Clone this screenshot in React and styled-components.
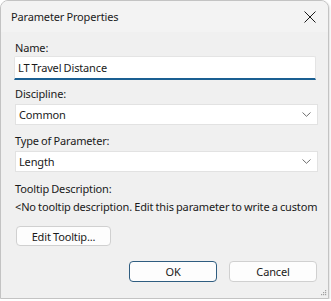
import React from "react";
import styled, { createGlobalStyle } from "styled-components";

const Global = createGlobalStyle`
  html, body { margin: 0; padding: 0; background: #ffffff; }
  body { font-family: "Noto Sans", "Open Sans", sans-serif; font-size: 11px; letter-spacing: -0.15px; word-spacing: -0.5px; color: #1a1a1a; }
  * { box-sizing: border-box; }
`;

const Window = styled.div`
  position: relative;
  width: 329px;
  height: 299px;
  border: 1px solid #c3c3c3;
  border-radius: 8px 8px 0 0;
  background: #f0f0f0;
  display: flex;
  flex-direction: column;
  overflow: hidden;
  box-shadow: 1px 1px 2px rgba(0,0,0,0.12);
`;

const TitleBar = styled.div`
  height: 31px;
  display: flex;
  align-items: center;
  justify-content: space-between;
  padding: 0 10px 0 10px;
  background: #f3f3f3;
`;

const Title = styled.span`
  font-size: 11px;
  color: #1b1b1b;
`;

const Close = styled.button`
  width: 14px;
  height: 14px;
  padding: 0;
  border: 0;
  background: transparent;
  display: flex;
  align-items: center;
  justify-content: center;
  margin-right: 1px;
`;

const Body = styled.div`
  display: flex;
  flex-direction: column;
  padding: 0 11px 0 13px;
`;

const Label = styled.div`
  height: 16px;
  line-height: 16px;
  margin-top: ${(p) => p.$mt}px;
  margin-left: 1px;
  white-space: nowrap;
`;

const TextInput = styled.div`
  height: 24px;
  width: 302px;
  background: #ffffff;
  border: 1px solid #e4e4e4;
  border-bottom: 2px solid #1a5f92;
  border-radius: 2px 2px 0 0;
  display: flex;
  align-items: center;
  padding-left: 3px;
`;

const Select = styled.div`
  height: 21px;
  margin-top: 2px;
  margin-left: 1px;
  width: 303px;
  background: #ffffff;
  border: 1px solid #e2e2e2;
  display: flex;
  align-items: center;
  justify-content: space-between;
  padding: 0 6px 0 3px;
`;

const Button = styled.button`
  font-family: inherit;
  font-size: 11px;
  letter-spacing: -0.15px;
  word-spacing: -0.5px;
  color: #1a1a1a;
  height: ${(p) => p.$h}px;
  width: ${(p) => p.$w}px;
  background: #fdfdfd;
  border: 1px solid ${(p) => (p.$primary ? "#2f5d80" : "#d0d0d0")};
  border-radius: 4px;
  padding: 0;
  display: flex;
  align-items: center;
  justify-content: center;
`;

const EditRow = styled.div`
  margin-top: 11px;
  margin-left: 2px;
  display: flex;
`;

const ButtonRow = styled.div`
  margin-top: 15px;
  display: flex;
  justify-content: flex-end;
  gap: 12px;
`;

const Grip = styled.svg`
  position: absolute;
  right: 1px;
  bottom: 1px;
`;

const Chevron = () => (
  <svg width="9" height="5" viewBox="0 0 9 5">
    <path d="M0.5 0.5 L4.5 4.3 L8.5 0.5" fill="none" stroke="#5f5f5f" strokeWidth="0.9" />
  </svg>
);

export default function App() {
  return (
    <>
      <Global />
      <Window>
        <TitleBar>
          <Title>Parameter Properties</Title>
          <Close aria-label="Close">
            <svg width="12" height="12" viewBox="0 0 12 12">
              <path d="M0.5 0.5 L11.5 11.5 M11.5 0.5 L0.5 11.5" stroke="#1a1a1a" strokeWidth="1" />
            </svg>
          </Close>
        </TitleBar>
        <Body>
          <Label $mt={8}>Name:</Label>
          <TextInput>LT Travel Distance</TextInput>
          <Label $mt={6}>Discipline:</Label>
          <Select>
            <span>Common</span>
            <Chevron />
          </Select>
          <Label $mt={8}>Type of Parameter:</Label>
          <Select>
            <span>Length</span>
            <Chevron />
          </Select>
          <Label $mt={9}>Tooltip Description:</Label>
          <Label $mt={2}>&lt;No tooltip description. Edit this parameter to write a custom</Label>
          <EditRow>
            <Button $w={95} $h={20}>Edit Tooltip...</Button>
          </EditRow>
          <ButtonRow>
            <Button $w={88} $h={21} $primary>OK</Button>
            <Button $w={88} $h={21}>Cancel</Button>
          </ButtonRow>
        </Body>
        <Grip width="7" height="7" viewBox="0 0 7 7">
          <g fill="#a0a0a0">
            <rect x="5" y="0" width="1.2" height="1.2" />
            <rect x="3" y="2" width="1.2" height="1.2" />
            <rect x="5" y="2" width="1.2" height="1.2" />
            <rect x="1" y="4" width="1.2" height="1.2" />
            <rect x="3" y="4" width="1.2" height="1.2" />
            <rect x="5" y="4" width="1.2" height="1.2" />
          </g>
        </Grip>
      </Window>
    </>
  );
}
